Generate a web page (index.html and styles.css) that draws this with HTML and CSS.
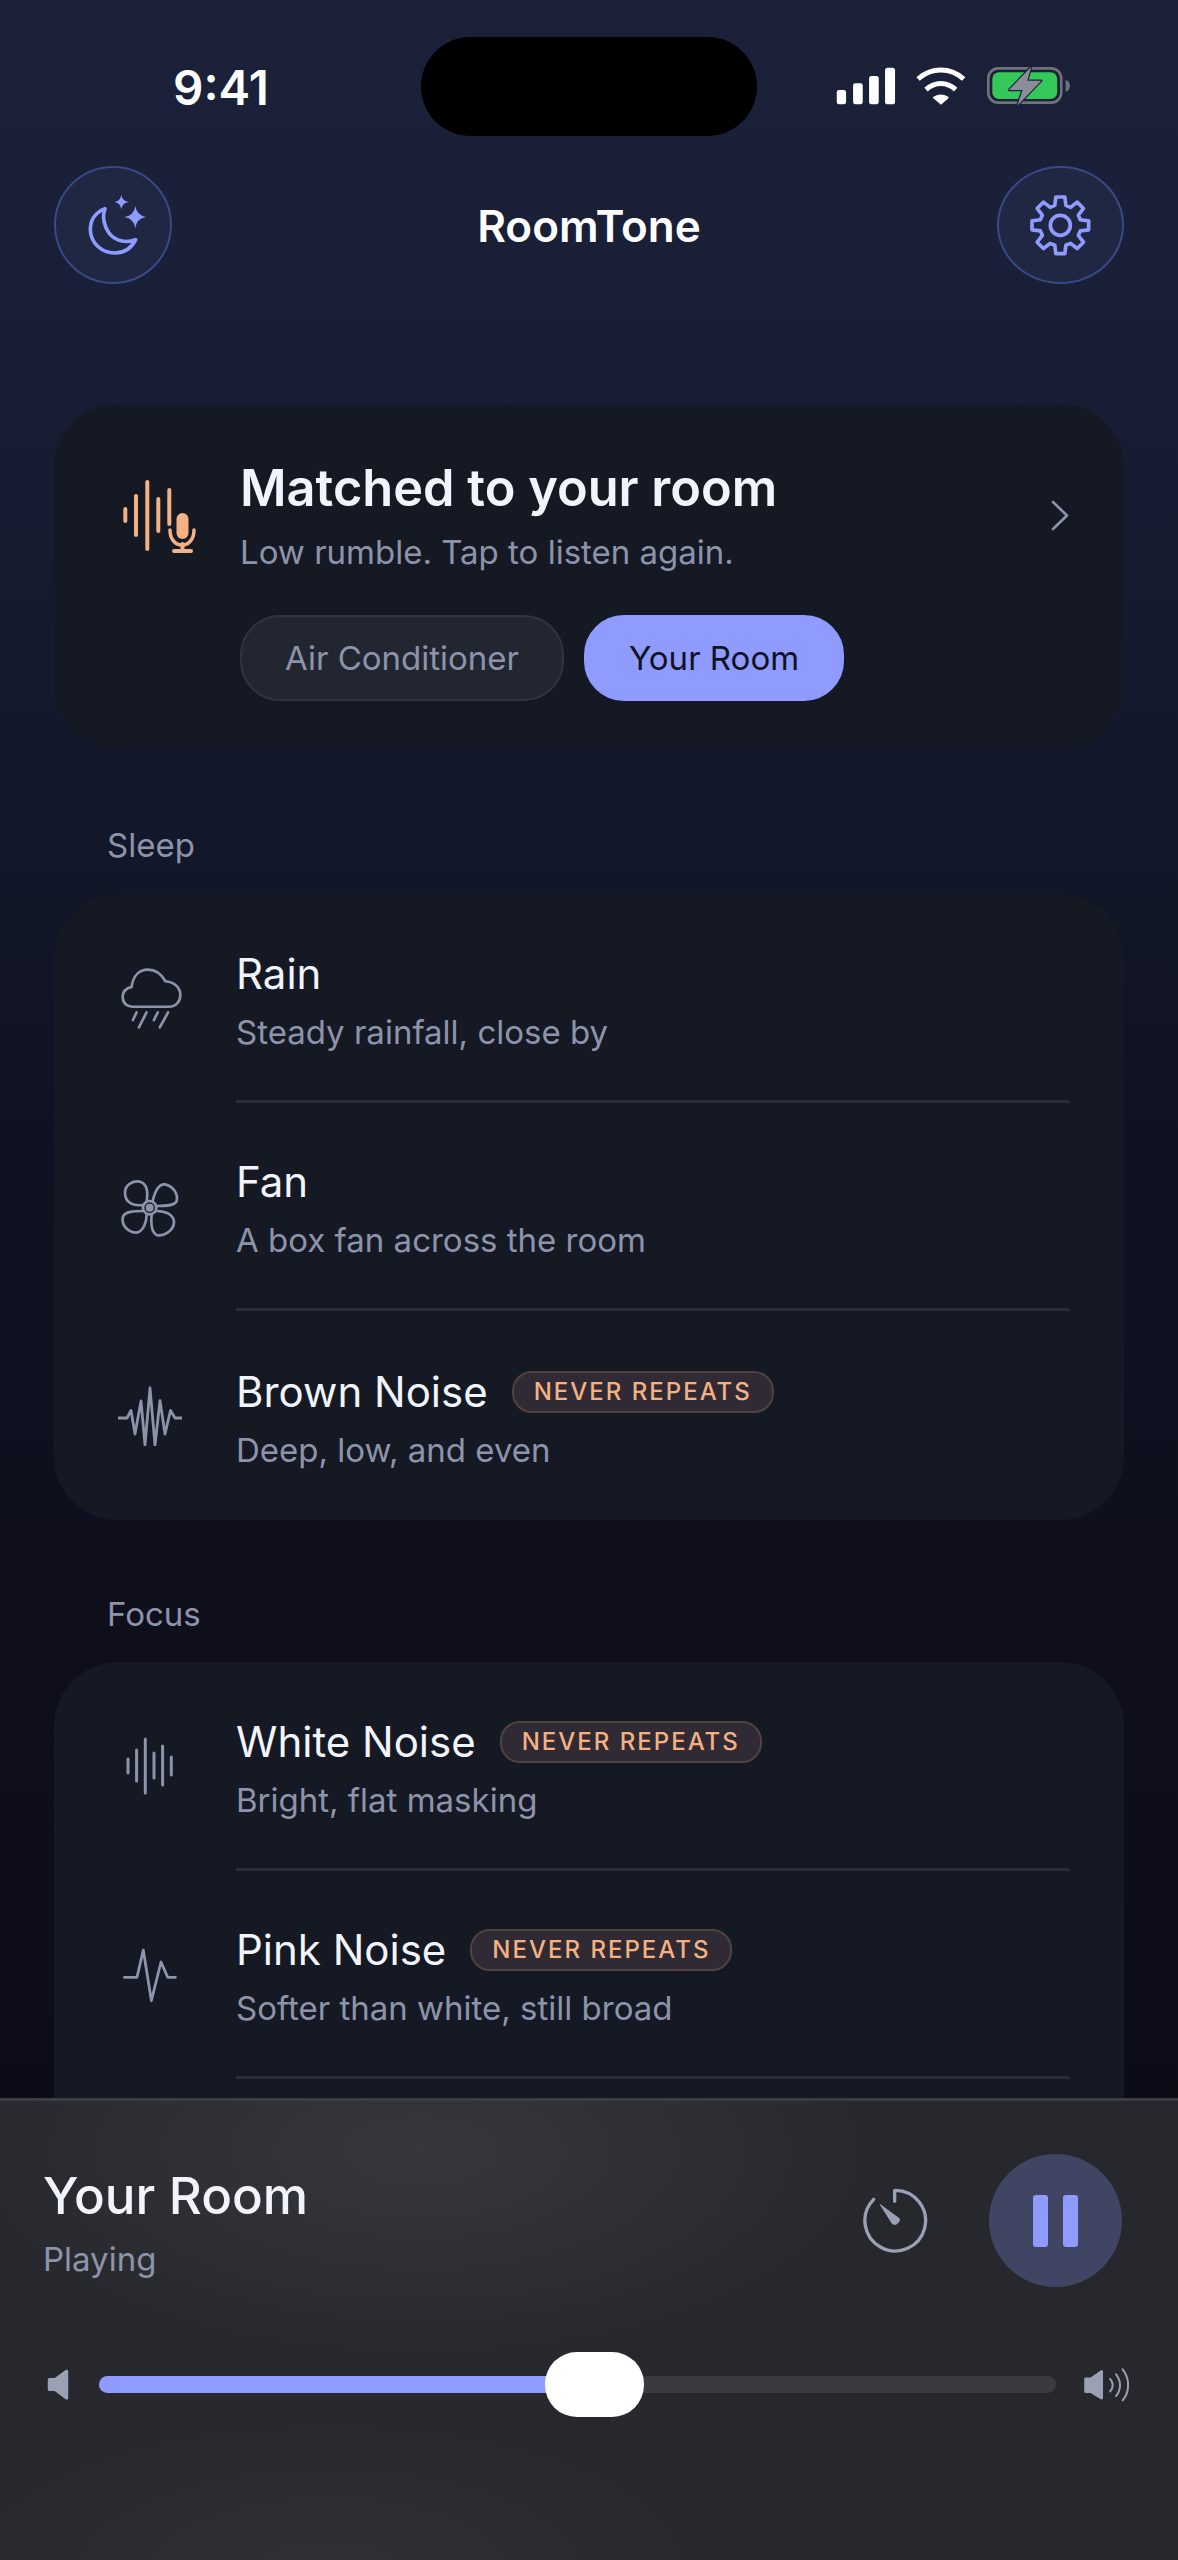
FILE: index.html
```html
<!DOCTYPE html>
<html lang="en">
<head>
    <meta charset="UTF-8">
    <meta name="viewport" content="width=device-width, initial-scale=1.0">
    <title>RoomTone</title>
    <link rel="stylesheet" href="styles.css">
</head>
<body>

    <div class="content">
        <div class="status">
            <div class="time-wrap"><span class="time">9:41</span></div>
            <div class="island"></div>
            <svg class="status-icons" viewBox="100 75 720 130">
                <rect x="108" y="150" width="28" height="43" rx="7" fill="#fff"/>
                <rect x="157" y="130" width="29" height="63" rx="7" fill="#fff"/>
                <rect x="205" y="108" width="29" height="85" rx="7" fill="#fff"/>
                <rect x="253" y="83" width="30" height="110" rx="8" fill="#fff"/>
                <path d="M352 117 C392 81 449 81 489 117" fill="none" stroke="#fff" stroke-width="15" stroke-linejoin="round"/>
                <path d="M376 149 C402 124 439 124 465 149" fill="none" stroke="#fff" stroke-width="15"/>
                <path d="M396 173 C410 160 431 160 445 173 L421 194 Z" fill="#fff"/>
                <rect x="563" y="85" width="219" height="103" rx="30" fill="none" stroke="#6f727b" stroke-width="8"/>
                <rect x="575" y="97" width="195" height="80" rx="20" fill="#34c759"/>
                <path d="M795 120 C804 122 808 129 808 137 C808 146 804 153 795 155 Z" fill="#6f727b"/>
                <path d="M692 80 L625 150 H666 L650 197 L722 122 H680 Z" fill="#8b8d99" stroke="#1a2038" stroke-width="7" stroke-linejoin="round" paint-order="stroke"/>
            </svg>
        </div>

        <div class="header">
            <button class="round-btn moon-btn">
                <svg class="btn-icon" viewBox="117 125 200 200">
                    <path d="M192 175 C165 185 148 208 148 237 C148 278 182 308 222 308 C250 308 272 292 284 268 C245 282 210 268 195 232 C186 212 186 192 192 175 Z" fill="none" stroke="#8f9bff" stroke-width="11" stroke-linejoin="round"/>
                    <path d="M283 167 Q287 196 317 200 Q287 204 283 234 Q279 204 250 200 Q279 196 283 167 Z" fill="#8f9bff"/>
                    <path d="M241 134 Q244 152 264 155 Q244 158 241 176 Q238 158 220 155 Q238 152 241 134 Z" fill="#8f9bff"/>
                </svg>
            </button>
            <div class="app-title">RoomTone</div>
            <button class="round-btn gear-btn">
                <svg class="btn-icon" viewBox="-100 -100 200 200">
                    <path d="M-16.6 -59.8 L-13.5 -85 L13.5 -85 L16.6 -59.8 L30.5 -54 L50.6 -69.6 L69.6 -50.6 L54 -30.5 L59.8 -16.6 L85 -13.5 L85 13.5 L59.8 16.6 L54 30.5 L69.6 50.6 L50.6 69.6 L30.5 54 L16.6 59.8 L13.5 85 L-13.5 85 L-16.6 59.8 L-30.5 54 L-50.6 69.6 L-69.6 50.6 L-54 30.5 L-59.8 16.6 L-85 13.5 L-85 -13.5 L-59.8 -16.6 L-54 -30.5 L-69.6 -50.6 L-50.6 -69.6 L-30.5 -54 Z" fill="none" stroke="#8f9bff" stroke-width="11" stroke-linejoin="round"/>
                    <circle r="30" fill="none" stroke="#8f9bff" stroke-width="11"/>
                </svg>
            </button>
        </div>

        <div class="card match-card">
            <div class="match-head">
                <svg class="mic-icon" viewBox="20 10 76 84">
                    <g stroke="#f4b183" stroke-width="4" stroke-linecap="round" fill="none">
                        <path d="M25.3 45 V57"/>
                        <path d="M36 32 V71"/>
                        <path d="M47.3 18 V85"/>
                        <path d="M58.3 35 V67"/>
                        <path d="M69.3 26 V60"/>
                        <path d="M70 66 C70 86 94 86 94 66" stroke-width="3.5"/>
                        <path d="M82.5 80 V87"/>
                        <path d="M74 87 H91"/>
                    </g>
                    <rect x="76.5" y="49" width="12" height="26" rx="6" fill="#f4b183"/>
                </svg>
                <div class="match-text">
                    <div class="match-title">Matched to your room</div>
                    <div class="match-sub">Low rumble. Tap to listen again.</div>
                </div>
                <svg class="chevron" viewBox="0 0 19 31">
                    <path d="M2 2 L16 15.5 L2 29" fill="none" stroke="#8d94aa" stroke-width="2.6" stroke-linecap="round" stroke-linejoin="round"/>
                </svg>
            </div>
            <div class="chips">
                <div class="chip">Air Conditioner</div>
                <div class="chip chip-on">Your Room</div>
            </div>
        </div>

        <div class="section-label">Sleep</div>
        <div class="card">
            <div class="row">
                <div class="row-icon">
                    <svg viewBox="55 80 190 190" width="63" height="63">
                        <g fill="none" stroke="#8d94aa" stroke-linecap="round" stroke-linejoin="round" stroke-width="8">
                            <path d="M95 200 H205 C228 200 240 182 240 165 C240 142 222 125 195 123 C182 100 165 88 143 88 C115 88 97 108 93 140 C75 145 66 155 66 170 C66 190 80 200 95 200 Z"/>
                            <path d="M108 217 L97 240"/>
                            <path d="M138 217 L115 262"/>
                            <path d="M172 217 L160 240"/>
                            <path d="M203 217 L178 262"/>
                        </g>
                    </svg>
                </div>
                <div class="row-body">
                    <div class="row-title">Rain</div>
                    <div class="row-sub">Steady rainfall, close by</div>
                </div>
            </div>
            <div class="row">
                <div class="row-icon">
                    <svg viewBox="60 708 180 180" width="60" height="60">
                        <g fill="none" stroke="#8d94aa" stroke-linecap="round" stroke-linejoin="round" stroke-width="8">
                            <circle cx="149" cy="800" r="20"/>
                            <path d="M129 792 C100 796 75 785 75 755 C75 730 100 718 120 722 C140 728 145 750 140 780"/>
                            <path d="M158 780 C165 750 175 728 195 730 C220 735 235 760 230 780 C225 795 195 795 170 795"/>
                            <path d="M170 810 C195 810 222 820 222 845 C220 870 190 888 170 882 C155 875 152 850 155 820"/>
                            <path d="M129 810 C105 810 72 810 68 830 C65 855 85 875 110 875 C130 870 140 845 140 820"/>
                        </g>
                        <circle cx="149" cy="800" r="12" fill="#8d94aa"/>
                    </svg>
                </div>
                <div class="row-body">
                    <div class="row-title">Fan</div>
                    <div class="row-sub">A box fan across the room</div>
                </div>
            </div>
            <div class="row row-last">
                <div class="row-icon">
                    <svg viewBox="-1 -4 66 62" width="66" height="62">
                        <path d="M0 30 H9 L13 22.5 L17 46 L23 13 L27 57 L32 0 L37 57 L42 12.6 L47 46 L52.5 22.5 L57 30 H64" fill="none" stroke="#8d94aa" stroke-width="2.8" stroke-linejoin="round"/>
                    </svg>
                </div>
                <div class="row-body">
                    <div class="row-title">Brown Noise <span class="badge">NEVER REPEATS</span></div>
                    <div class="row-sub">Deep, low, and even</div>
                </div>
            </div>
        </div>

        <div class="section-label focus-label">Focus</div>
        <div class="card card-clipped">
            <div class="row">
                <div class="row-icon">
                    <svg viewBox="0 0 60 70" width="60" height="70">
                        <g stroke="#8d94aa" stroke-width="3" stroke-linecap="round">
                            <path d="M8 28 V42"/>
                            <path d="M16.6 19 V50"/>
                            <path d="M25.3 8 V62"/>
                            <path d="M34 22 V47"/>
                            <path d="M42.6 15 V54"/>
                            <path d="M51.3 26 V44"/>
                        </g>
                    </svg>
                </div>
                <div class="row-body">
                    <div class="row-title">White Noise <span class="badge">NEVER REPEATS</span></div>
                    <div class="row-sub">Bright, flat masking</div>
                </div>
            </div>
            <div class="row">
                <div class="row-icon">
                    <svg viewBox="0 0 60 70" width="60" height="70">
                        <path d="M4.4 37.3 H17 L23.3 10 L31.4 60.7 L41 22 L47.7 37.3 H55.4" fill="none" stroke="#8d94aa" stroke-width="2.8" stroke-linecap="round" stroke-linejoin="round"/>
                    </svg>
                </div>
                <div class="row-body">
                    <div class="row-title">Pink Noise <span class="badge">NEVER REPEATS</span></div>
                    <div class="row-sub">Softer than white, still broad</div>
                </div>
            </div>
        </div>
    </div>

    <div class="player">
        <div class="player-top">
            <div class="now">
                <div class="now-title">Your Room</div>
                <div class="now-sub">Playing</div>
            </div>
            <svg class="timer" viewBox="70 145 200 200">
                <path d="M105 182 A91 91 0 1 0 168 155 V188" fill="none" stroke="#9aa1b5" stroke-width="10" stroke-linecap="round" stroke-linejoin="round"/>
                <path d="M125 198 L182 240 C184 250 172 262 161 255 Z" fill="#9aa1b5" stroke="#9aa1b5" stroke-width="3" stroke-linejoin="round"/>
            </svg>
            <div class="pause">
                <span class="pause-bar"></span>
                <span class="pause-bar"></span>
            </div>
        </div>
        <div class="slider-row">
            <svg class="speaker-low" viewBox="80 85 72 100">
                <path d="M90 120 H108 L142 95 V176 L108 150 H90 Z" fill="#9aa1b5" stroke="#9aa1b5" stroke-width="10" stroke-linejoin="round"/>
            </svg>
            <div class="track">
                <div class="fill" style="width: 51.8%">
                    <div class="thumb"></div>
                </div>
            </div>
            <svg class="speaker-high" viewBox="725 685 145 103">
                <path d="M736 718 H752 L784 696 V776 L752 756 H736 Z" fill="#9aa1b5" stroke="#9aa1b5" stroke-width="9" stroke-linejoin="round"/>
                <g fill="none" stroke="#9aa1b5" stroke-width="6" stroke-linecap="round">
                    <path d="M810 718 C820 730 820 744 810 756"/>
                    <path d="M828 704 C844 724 844 750 828 770"/>
                    <path d="M848 689 C870 716 870 758 848 783"/>
                </g>
            </svg>
        </div>
    </div>

</body>
</html>
```

FILE: styles.css
```css
* {
    box-sizing: border-box;
}

html, body {
    margin: 0;
    padding: 0;
}

body {
    width: 1178px;
    height: 2560px;
    overflow: hidden;
    display: flex;
    flex-direction: column;
    font-family: "Inter", "Liberation Sans", sans-serif;
    color: #f2f4fb;
    background: linear-gradient(180deg, #1b2138 0%, #181f36 12%, #121829 33%, #101324 42%, #0f0f1c 64%, #070a12 100%);
}

.content {
    flex: 1;
    min-height: 0;
    overflow: hidden;
    padding-top: 37px;
}

/* status bar */
.status {
    display: grid;
    grid-template-columns: 421px 336px 1fr;
    align-items: center;
    height: 99px;
}

.time-wrap {
    padding-left: 173px;
    padding-top: 2px;
}

.time {
    font-size: 47.5px;
    font-weight: 600;
    color: #fff;
}

.island {
    height: 99px;
    background: #000;
    border-radius: 50px;
}

.status-icons {
    width: 240px;
    height: 43.3px;
    margin-left: 77px;
}

/* header */
.header {
    display: grid;
    grid-template-columns: 1fr auto 1fr;
    align-items: center;
    margin-top: 30px;
    padding: 0 54px;
}

.round-btn {
    display: flex;
    align-items: center;
    justify-content: center;
    width: 118px;
    height: 118px;
    padding: 0;
    background: #1f2743;
    border: 2.5px solid #374a88;
    border-radius: 50%;
}

.gear-btn {
    width: 127px;
    justify-self: end;
}

.btn-icon {
    width: 66.67px;
    height: 66.67px;
}

.app-title {
    padding-top: 2px;
    font-size: 44px;
    font-weight: 600;
    color: #fff;
}

/* cards */
.card {
    margin: 0 54px;
    background: #151924;
    border-radius: 64px;
}

.card-clipped {
    padding-bottom: 120px;
}

.match-card {
    margin-top: 120px;
    padding: 54px 54px 48px 66px;
}

.match-head {
    display: flex;
    align-items: center;
}

.mic-icon {
    width: 76px;
    height: 84px;
    margin-right: 44px;
}

.match-text {
    flex: 1;
}

.match-title {
    font-size: 50.5px;
    font-weight: 600;
    line-height: 60px;
}

.match-sub {
    margin-top: 13px;
    font-size: 33px;
    line-height: 42px;
    color: #8d94aa;
}

.chevron {
    width: 19px;
    height: 31px;
}

.chips {
    display: flex;
    gap: 20px;
    margin-top: 42px;
    padding-left: 120px;
}

.chip {
    display: flex;
    align-items: center;
    padding: 0 43px;
    height: 86px;
    font-size: 33px;
    color: #8d94aa;
    background: #222631;
    border: 2.5px solid #31343f;
    border-radius: 40px;
}

.chip-on {
    color: #10131f;
    background: #8f9bff;
    border-color: #8f9bff;
}

.section-label {
    margin: 76px 0 29px 107px;
    font-size: 33px;
    line-height: 40px;
    color: #8d94aa;
}

.focus-label {
    margin-top: 74px;
    margin-bottom: 28.5px;
}

/* list rows */
.row {
    display: flex;
    align-items: center;
    height: 208.5px;
    padding-right: 54px;
}

.row-icon {
    flex: none;
    display: flex;
    justify-content: center;
    width: 182px;
    padding-left: 10px;
}

.row-body {
    flex: 1;
    display: flex;
    flex-direction: column;
    justify-content: center;
    height: 100%;
    padding-top: 7px;
    border-bottom: 3px solid #2a2d38;
}

.row-last .row-body {
    border-bottom: none;
}

.row-title {
    display: flex;
    align-items: center;
    gap: 24px;
    font-size: 42px;
    line-height: 52px;
}

.row-sub {
    margin-top: 11px;
    font-size: 33px;
    line-height: 42px;
    color: #8d94aa;
}

.badge {
    display: flex;
    align-items: center;
    height: 42px;
    padding: 0 20px;
    font-size: 24px;
    font-weight: 500;
    letter-spacing: 2px;
    color: #f4b183;
    background: #2f2a33;
    border: 2px solid #50423f;
    border-radius: 20px;
}

/* now playing */
.player {
    flex: none;
    height: 462px;
    padding: 53px 48px 0 43px;
    border-top: 3px solid #3a3d47;
    background:
        radial-gradient(ellipse 480px 220px at 420px 50px, #36383e, transparent),
        radial-gradient(ellipse 420px 170px at 330px 470px, #303137, transparent),
        #26282d;
}

.player-top {
    display: flex;
    align-items: center;
    margin-right: 8px;
}

.now {
    flex: 1;
    padding-top: 4px;
}

.now-title {
    font-size: 51px;
    font-weight: 500;
    line-height: 60px;
}

.now-sub {
    margin-top: 12px;
    font-size: 33px;
    line-height: 42px;
    color: #8d94aa;
}

.timer {
    width: 66.67px;
    height: 66.67px;
    margin-right: 60px;
}

.pause {
    display: flex;
    align-items: center;
    justify-content: center;
    gap: 15px;
    width: 133px;
    height: 133px;
    background: #404563;
    border-radius: 50%;
}

.pause-bar {
    width: 15px;
    height: 52px;
    background: #8f9bff;
    border-radius: 3px;
}

.slider-row {
    display: flex;
    align-items: center;
    height: 65px;
    margin-top: 65px;
}

.speaker-low {
    flex: none;
    width: 24px;
    height: 33px;
    margin-left: 3px;
    margin-right: 29px;
}

.track {
    flex: none;
    width: 957px;
    height: 17px;
    background: #393b41;
    border-radius: 9px;
}

.fill {
    position: relative;
    height: 100%;
    background: #8f9bff;
    border-radius: 9px 0 0 9px;
}

.thumb {
    position: absolute;
    top: -24px;
    right: -49px;
    width: 99px;
    height: 65px;
    background: #fff;
    border-radius: 32px;
}

.speaker-high {
    flex: none;
    width: 48px;
    height: 34px;
    margin-left: 26px;
}
```
